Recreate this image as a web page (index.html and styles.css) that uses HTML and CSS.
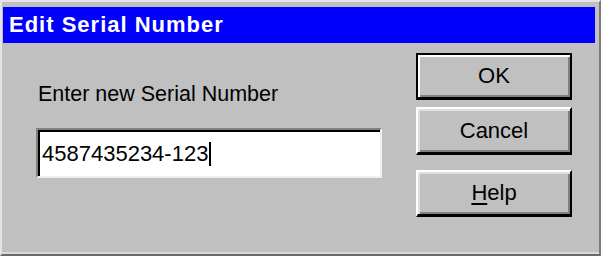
FILE: index.html
```html
<!DOCTYPE html>
<html>
<head>
<meta charset="utf-8">
<link rel="stylesheet" href="styles.css">
</head>
<body>
<div class="window">
  <div class="titlebar">Edit Serial Number</div>
  <div class="content">
    <div class="left">
      <div class="label">Enter new Serial Number</div>
      <div class="editbox"><span class="value">4587435234-123</span><span class="caret"></span></div>
    </div>
    <div class="buttons">
      <div class="btn btn-default">OK</div>
      <div class="btn btn-cancel">Cancel</div>
      <div class="btn btn-help"><u>H</u>elp</div>
    </div>
  </div>
</div>
</body>
</html>
```
FILE: styles.css
```css
html, body {
  margin: 0;
  padding: 0;
  background: #c0c0c0;
}
.window {
  width: 601px;
  height: 256px;
  box-sizing: border-box;
  background: #c0c0c0;
  padding: 5px 4px 4px 1px;
  border-top: 2px solid #e4e4e4;
  border-left: 2px solid #e4e4e4;
  border-right: 2px solid #7a7a7a;
  border-bottom: 2px solid #6a6a6a;
  box-shadow: inset 0 -2px 0 #d8d8d8;
  display: flex;
  flex-direction: column;
  font-family: "Liberation Sans", Arial, sans-serif;
  color: #000;
}
.titlebar {
  height: 36px;
  background: #0000fc;
  color: #fff;
  font-weight: bold;
  font-size: 22px;
  letter-spacing: 1px;
  line-height: 36px;
  padding-left: 6px;
  flex: none;
}
.content {
  display: flex;
  flex-direction: row;
  padding-left: 33px;
}
.left {
  width: 346px;
  padding-top: 38px;
}
.label {
  font-size: 21.5px;
  line-height: 26px;
  padding-left: 2px;
  height: 26px;
}
.editbox {
  margin-top: 21px;
  height: 50px;
  box-sizing: border-box;
  background: #fff;
  border-top: 2px solid #808080;
  border-left: 2px solid #808080;
  border-right: 2px solid #f0f0f0;
  border-bottom: 2px solid #f0f0f0;
  box-shadow: inset 2px 2px 0 #000;
  padding-left: 4px;
  padding-top: 2px;
  font-size: 22px;
  line-height: 44px;
  display: flex;
  align-items: center;
}
.caret {
  display: inline-block;
  width: 2px;
  height: 24px;
  background: #000;
  margin-left: 1px;
}
.buttons {
  margin-left: 34px;
  padding-top: 10px;
  display: flex;
  flex-direction: column;
  width: 156px;
}
.btn {
  box-sizing: border-box;
  height: 47px;
  font-size: 22px;
  display: flex;
  align-items: center;
  justify-content: center;
  background: #c0c0c0;
}
.btn-default {
  border: 2px solid #000;
  border-bottom-width: 3px;
  box-shadow: inset 2px 2px 0 #fff, inset -2px -2px 0 #808080;
}
.btn-cancel {
  margin-top: 7px;
  height: 48px;
  border-top: 2px solid #fff;
  border-left: 2px solid #fff;
  border-right: 2px solid #000;
  border-bottom: 3px solid #000;
  box-shadow: inset 2px 2px 0 #dfdfdf, inset -2px -2px 0 #808080;
}
.btn-help {
  margin-top: 15px;
  border-top: 2px solid #fff;
  border-left: 2px solid #fff;
  border-right: 2px solid #000;
  border-bottom: 3px solid #000;
  box-shadow: inset 2px 2px 0 #dfdfdf, inset -2px -2px 0 #808080;
}
.btn u {
  text-decoration-thickness: 2px;
  text-underline-offset: 3px;
}
```
